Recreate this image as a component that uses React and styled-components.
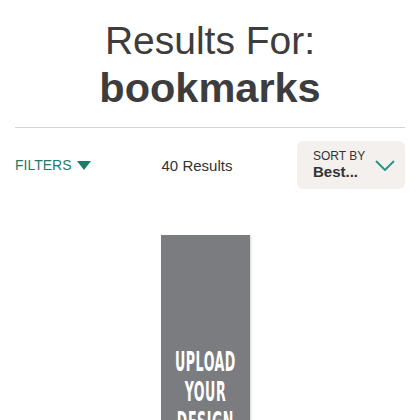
import React from "react";
import styled, { createGlobalStyle } from "styled-components";

const Global = createGlobalStyle`
  html, body { margin: 0; padding: 0; background: #fff; }
  body { font-family: "Liberation Sans", Arial, sans-serif; overflow: hidden; }
`;

const Page = styled.div`
  width: 420px;
  height: 420px;
  overflow: hidden;
`;

const Header = styled.header`
  padding-top: 17px;
  text-align: center;
  color: #3d3d3d;
`;

const Title = styled.div`
  font-size: 39px;
  line-height: 47px;
  font-weight: 400;
`;

const Query = styled.div`
  font-size: 41.5px;
  line-height: 47px;
  font-weight: 700;
`;

const Divider = styled.hr`
  margin: 16px 15px 0;
  border: 0;
  height: 1px;
  background: #d4d4d4;
`;

const Toolbar = styled.div`
  display: flex;
  align-items: center;
  margin-top: 13px;
  padding: 0 15px;
  height: 48px;
`;

const Filters = styled.button`
  display: flex;
  align-items: center;
  gap: 5px;
  padding: 0;
  border: 0;
  background: none;
  font-family: inherit;
  font-size: 14px;
  color: #1f7b6a;
  cursor: pointer;
`;

const Count = styled.span`
  margin-left: 71px;
  font-size: 15px;
  color: #333;
`;

const Sort = styled.div`
  margin-left: auto;
  width: 108px;
  height: 48px;
  box-sizing: border-box;
  background: #f4f0ee;
  border-radius: 6px;
  display: flex;
  align-items: center;
  justify-content: space-between;
  padding: 0 10px 0 16px;
`;

const SortText = styled.div`
  display: flex;
  flex-direction: column;
  padding-top: 1px;
`;

const SortLabel = styled.span`
  font-size: 12px;
  line-height: 13px;
  color: #333;
`;

const SortValue = styled.span`
  font-size: 15px;
  line-height: 18px;
  font-weight: 700;
  color: #333;
`;

const Card = styled.div`
  margin: 46px 0 0 161px;
  width: 89px;
  height: 260px;
  background: #7b7c80;
  box-shadow: 1px 1px 2px rgba(0, 0, 0, 0.18);
  padding-top: 112px;
  box-sizing: border-box;
  overflow: hidden;
  display: flex;
  flex-direction: column;
  align-items: center;
`;

const CardText = styled.div`
  width: max-content;
  font-family: "DejaVu Sans Condensed", "DejaVu Sans", sans-serif;
  font-stretch: condensed;
  font-weight: 700;
  font-size: 26px;
  line-height: 30px;
  color: #fff;
  text-align: center;
  transform: scaleX(0.54);
  transform-origin: center top;
  white-space: nowrap;
  letter-spacing: 1px;
`;

export default function App() {
  return (
    <Page>
      <Global />
      <Header>
        <Title>Results For:</Title>
        <Query>bookmarks</Query>
      </Header>
      <Divider />
      <Toolbar>
        <Filters>
          FILTERS
          <svg width="14" height="9" viewBox="0 0 14 9">
            <path d="M0 0H14L7 9Z" fill="#1f7b6a" />
          </svg>
        </Filters>
        <Count>40 Results</Count>
        <Sort>
          <SortText>
            <SortLabel>SORT BY</SortLabel>
            <SortValue>Best...</SortValue>
          </SortText>
          <svg width="20" height="11" viewBox="0 0 20 11">
            <path d="M1 1L10 10L19 1" fill="none" stroke="#2a9884" strokeWidth="2" />
          </svg>
        </Sort>
      </Toolbar>
      <Card>
        <CardText>
          UPLOAD
          <br />
          YOUR
          <br />
          DESIGN
        </CardText>
      </Card>
    </Page>
  );
}
